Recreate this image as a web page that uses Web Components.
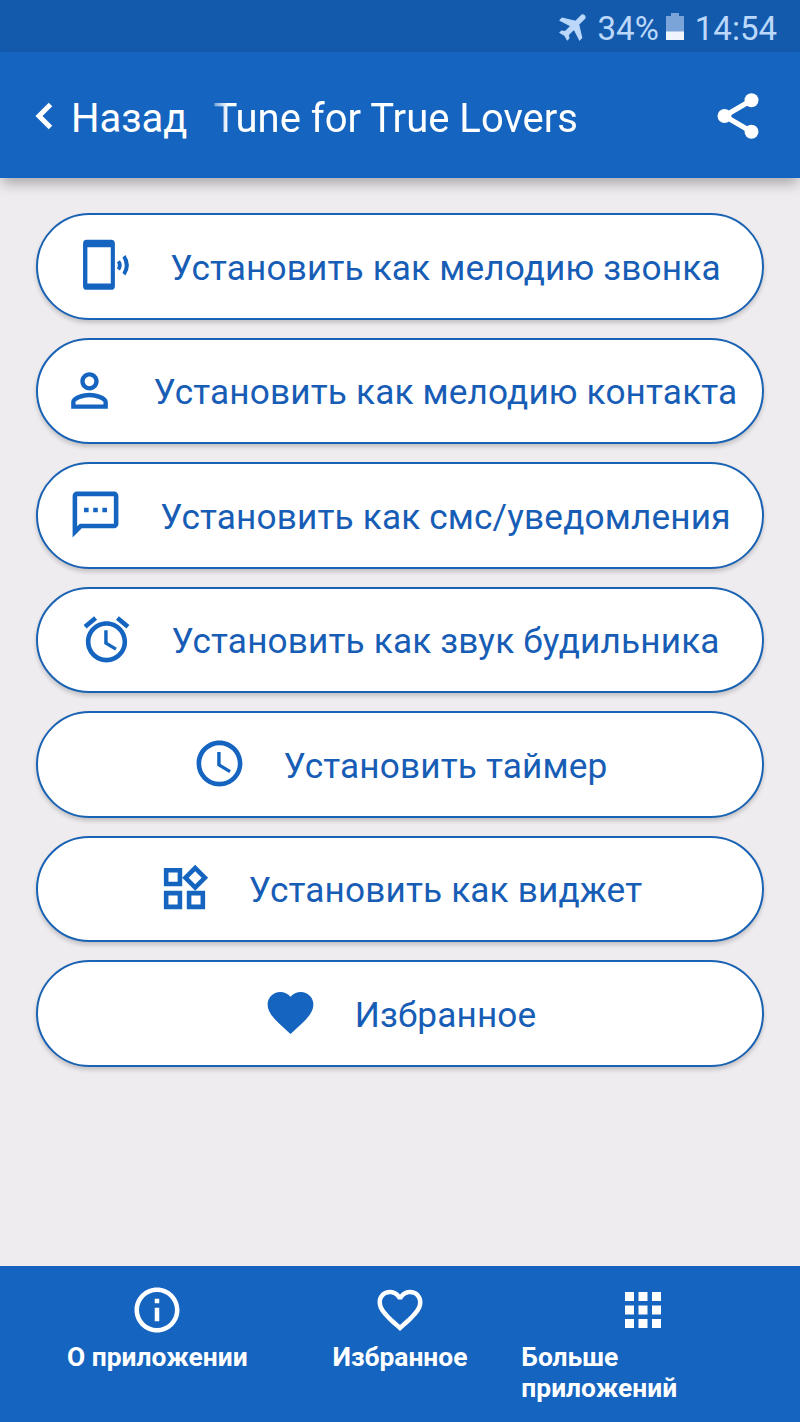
<!DOCTYPE html>
<html lang="ru">
  <head>
    <meta charset="UTF-8" />
    <meta name="viewport" content="width=device-width, initial-scale=1.0" />
    <title>Tune for True Lovers</title>
    <style>
      body {
        margin: 0;
        height: 1422px;
        display: flex;
        flex-direction: column;
        background: #eeecef;
        font-family: Roboto, sans-serif;
        overflow: hidden;
        --blue: #1565c0;
      }
      main {
        flex: 1;
        display: flex;
        flex-direction: column;
        gap: 18px;
        padding: 35px 36px 0;
      }
    </style>
  </head>
  <body>
    <template id="status-bar">
      <style>
        :host {
          display: flex;
          align-items: center;
          justify-content: flex-end;
          box-sizing: border-box;
          height: 52px;
          padding: 4px 23px 0 0;
          background: #145aac;
          color: #bbd8fb;
          font-size: 33px;
          line-height: 39px;
        }
        .plane {
          width: 35px;
          height: 35px;
          margin: -4px 6px 0 0;
          fill: currentColor;
          stroke: currentColor;
          stroke-width: 0.8;
        }
        .battery {
          width: 18px;
          height: 27px;
          margin: -3px 11px 0 7px;
        }
      </style>
      <svg class="plane" viewBox="0 0 24 24">
        <path transform="rotate(45 12 12)" d="M21 16v-2l-8-5V3.5c0-.83-.67-1.5-1.5-1.5S10 2.67 10 3.5V9l-8 5v2l8-2.5V19l-2 1.5V22l3.5-1 3.5 1v-1.5L13 19v-5.5l8 2.5z" />
      </svg>
      <slot name="charge"></slot>
      <svg class="battery" viewBox="0 0 18 27">
        <path fill="#7ba5d9" d="M0 3h5V0h8v3h5v16H0z" />
        <path fill="#f0f5fc" d="M0 18.5h18V27H0z" />
      </svg>
      <slot name="time"></slot>
    </template>

    <template id="app-header">
      <style>
        :host {
          display: flex;
          align-items: center;
          box-sizing: border-box;
          height: 126px;
          padding: 0 35px 0 35px;
          background: var(--blue);
          color: #fff;
          font-size: 40px;
          line-height: 48px;
          box-shadow: 0 8px 12px -2px rgba(0, 0, 0, 0.28);
        }
        .back {
          width: 18px;
          height: 28px;
          margin: 1px 18px 0 0;
        }
        .title {
          flex: 1;
          margin: 7px 0 0 26px;
          -webkit-mask-image: linear-gradient(90deg, rgba(0, 0, 0, 0.4), #000 14px);
          mask-image: linear-gradient(90deg, rgba(0, 0, 0, 0.4), #000 14px);
        }
        .label {
          margin-top: 7px;
        }
        .share {
          width: 54px;
          height: 54px;
          margin-top: 1px;
          fill: #fff;
        }
      </style>
      <svg class="back" viewBox="0 0 18 28">
        <path d="M15.5 2.5 4 14l11.5 11.5" fill="none" stroke="#fff" stroke-width="5" />
      </svg>
      <span class="label"><slot name="back"></slot></span>
      <span class="title"><slot></slot></span>
      <svg class="share" viewBox="0 0 24 24">
        <path d="M18 5 6 12l12 7" fill="none" stroke="#fff" stroke-width="2.3" />
        <circle cx="18" cy="5" r="3.1" />
        <circle cx="6" cy="12" r="3.1" />
        <circle cx="18" cy="19" r="3.1" />
      </svg>
    </template>

    <template id="action-button">
      <style>
        :host {
          display: flex;
          align-items: center;
          justify-content: center;
          gap: 37px;
          box-sizing: border-box;
          height: 106.5px;
          padding-right: 1px;
          border: 2px solid #1a62b3;
          border-radius: 54px;
          background: #fff;
          color: #175db5;
          font-size: 35.2px;
          line-height: 42px;
          letter-spacing: 0.15px;
          white-space: nowrap;
          box-shadow: 0 3px 4px rgba(0, 0, 0, 0.18);
        }
        svg {
          flex: none;
          width: 55px;
          height: 55px;
          margin-bottom: 1px;
          fill: var(--blue);
        }
        span {
          margin-top: 3px;
        }
      </style>
      <svg viewBox="0 0 24 24"><path /></svg>
      <span><slot></slot></span>
    </template>

    <template id="nav-tab">
      <style>
        :host {
          display: flex;
          flex-direction: column;
          align-items: center;
          flex: 1 1 0;
          min-width: 0;
          color: #fff;
          font-size: 26.4px;
          font-weight: 700;
          line-height: 31px;
        }
        svg {
          width: 54px;
          height: 54px;
          margin-bottom: 5px;
          fill: #fff;
        }
      </style>
      <svg viewBox="0 0 24 24"><path /></svg>
      <span><slot></slot></span>
    </template>

    <template id="bottom-nav">
      <style>
        :host {
          display: flex;
          box-sizing: border-box;
          height: 156px;
          padding: 17px 36px 0;
          background: var(--blue);
        }
      </style>
      <slot></slot>
    </template>

    <status-bar>
      <span slot="charge">34%</span>
      <span slot="time">14:54</span>
    </status-bar>
    <app-header><span slot="back">Назад</span>Tune for True Lovers</app-header>
    <main>
      <action-button icon="ringtone">Установить как мелодию звонка</action-button>
      <action-button icon="person">Установить как мелодию контакта</action-button>
      <action-button icon="sms">Установить как смс/уведомления</action-button>
      <action-button icon="alarm">Установить как звук будильника</action-button>
      <action-button icon="clock">Установить таймер</action-button>
      <action-button icon="widgets">Установить как виджет</action-button>
      <action-button icon="heart">Избранное</action-button>
    </main>
    <bottom-nav>
      <nav-tab icon="info">О приложении</nav-tab>
      <nav-tab icon="heartOutline">Избранное</nav-tab>
      <nav-tab icon="apps">Больше приложений</nav-tab>
    </bottom-nav>

    <script>
      // icon paths on a 24x24 grid
      const icons = {
        ringtone:
          'M3.8.8h10.6q1.7 0 1.7 1.7v18.4q0 1.7-1.7 1.7H3.8q-1.6 0-1.6-1.700V2.500Q2.200.8 3.800.8zM4.100 4v15.900h10.200V4zM17 10.600l1.300-.9q1.600 2.200 0 4.500l-1.300-.9q.8-1.400 0-2.700zM19.400 8.500l1.300-1.100q3 4.500 0 9l-1.300-1.100q2-3.400 0-6.800z',
        person:
          'M12 5.9c1.16 0 2.1.94 2.1 2.1s-.94 2.1-2.1 2.1S9.9 9.16 9.9 8s.94-2.1 2.1-2.1m0 9c2.97 0 6.1 1.46 6.1 2.1v1.1H5.9V17c0-.64 3.13-2.1 6.1-2.1M12 4C9.79 4 8 5.79 8 8s1.79 4 4 4 4-1.79 4-4-1.79-4-4-4zm0 9c-2.67 0-8 1.34-8 4v3h16v-3c0-2.66-5.33-4-8-4z',
        sms:
          'M20 2H4c-1.1 0-1.99.9-1.99 2L2 22l4-4h14c1.1 0 2-.9 2-2V4c0-1.1-.9-2-2-2zm0 14H5.17L4 17.17V4h16v12zM7 9h2v2H7zm8 0h2v2h-2zm-4 0h2v2h-2z',
        alarm:
          'M22 5.72l-4.6-3.86-1.29 1.53 4.6 3.86L22 5.72zM7.88 3.39L6.6 1.86 2 5.71l1.29 1.53 4.59-3.85zM12.5 8H11v6l4.75 2.85.75-1.23-4-2.37V8zM12 4c-4.97 0-9 4.03-9 9s4.02 9 9 9c4.97 0 9-4.03 9-9s-4.03-9-9-9zm0 16c-3.87 0-7-3.13-7-7s3.13-7 7-7 7 3.13 7 7-3.13 7-7 7z',
        clock:
          'M11.99 2C6.47 2 2 6.48 2 12s4.47 10 9.99 10C17.52 22 22 17.52 22 12S17.52 2 11.99 2zM12 20c-4.42 0-8-3.58-8-8s3.58-8 8-8 8 3.58 8 8-3.58 8-8 8zm.5-13H11v6l5.25 3.15.75-1.23-4.5-2.67z',
        widgets:
          'M16.66 4.52l2.83 2.83-2.83 2.83-2.83-2.83 2.83-2.83M9 5v4H5V5h4m10 10v4h-4v-4h4M9 15v4H5v-4h4m7.66-13.31L11 7.34 16.66 13l5.66-5.66-5.66-5.65zM11 3H3v8h8V3zm10 10h-8v8h8v-8zm-10 0H3v8h8v-8z',
        heart:
          'M12 21.35l-1.45-1.32C5.4 15.36 2 12.28 2 8.5 2 5.42 4.42 3 7.5 3c1.74 0 3.41.81 4.5 2.09C13.09 3.81 14.76 3 16.5 3 19.58 3 22 5.42 22 8.5c0 3.78-3.4 6.86-8.55 11.54L12 21.35z',
        info:
          'M11 7h2v2h-2zm0 4h2v6h-2zm1-9C6.48 2 2 6.48 2 12s4.48 10 10 10 10-4.48 10-10S17.52 2 12 2zm0 18c-4.41 0-8-3.59-8-8s3.59-8 8-8 8 3.59 8 8-3.59 8-8 8z',
        heartOutline:
          'M16.5 3c-1.74 0-3.41.81-4.5 2.09C10.91 3.81 9.24 3 7.5 3 4.42 3 2 5.42 2 8.5c0 3.78 3.4 6.86 8.55 11.54L12 21.35l1.45-1.32C18.6 15.36 22 12.28 22 8.5 22 5.42 19.58 3 16.5 3zm-4.4 15.55l-.1.1-.1-.1C7.14 14.24 4 11.39 4 8.5 4 6.5 5.5 5 7.5 5c1.54 0 3.04.99 3.57 2.36h1.87C13.46 5.99 14.96 5 16.5 5c2 0 3.5 1.5 3.5 3.5 0 2.89-3.14 5.74-7.9 10.05z',
        apps:
          'M4 8h4V4H4v4zm6 12h4v-4h-4v4zm-6 0h4v-4H4v4zm0-6h4v-4H4v4zm6 0h4v-4h-4v4zm6-10v4h4V4h-4zm-6 4h4V4h-4v4zm6 6h4v-4h-4v4zm0 6h4v-4h-4v4z'
      }

      // each element clones the template that carries its name
      class TemplateElement extends HTMLElement {
        constructor() {
          super()
          const template = document.getElementById(this.localName)
          this.attachShadow({ mode: 'open' }).appendChild(
            template.content.cloneNode(true)
          )
        }
      }

      class IconElement extends TemplateElement {
        connectedCallback() {
          const path = this.shadowRoot.querySelector('path')
          path.setAttribute('d', icons[this.getAttribute('icon')])
          path.setAttribute('fill-rule', 'evenodd')
        }
      }

      customElements.define('status-bar', class extends TemplateElement {})
      customElements.define('app-header', class extends TemplateElement {})
      customElements.define('bottom-nav', class extends TemplateElement {})
      customElements.define('action-button', class extends IconElement {})
      customElements.define('nav-tab', class extends IconElement {})
    </script>
  </body>
</html>
